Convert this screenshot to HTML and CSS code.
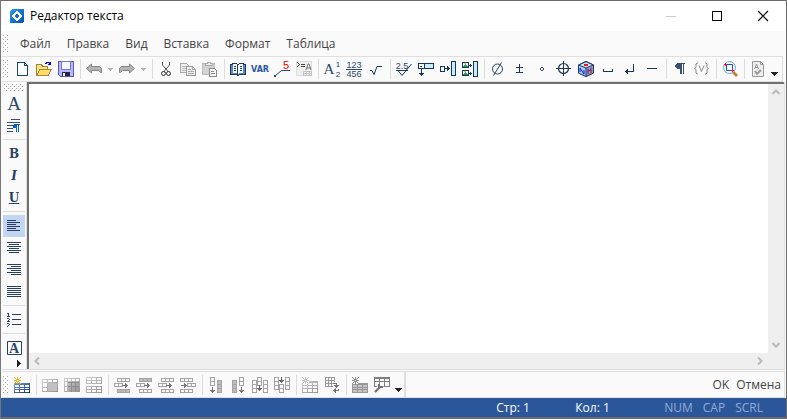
FILE: index.html
```
<!DOCTYPE html>
<html lang="ru">
<head>
<meta charset="utf-8">
<title>Редактор текста</title>
<link rel="stylesheet" href="styles.css">
</head>
<body>
<svg class="defs" aria-hidden="true">
  <defs>
    <linearGradient id="gray" x1="0" y1="0" x2="1" y2="1"><stop offset="0" stop-color="#cfcfcf"/><stop offset="1" stop-color="#929292"/></linearGradient>
    <linearGradient id="logo" x1="0" y1="0" x2="1" y2="1"><stop offset="0" stop-color="#2b9cf0"/><stop offset="1" stop-color="#0450ae"/></linearGradient>
    <linearGradient id="blue" x1="0" y1="0" x2="1" y2="1"><stop offset="0" stop-color="#7fa0d8"/><stop offset="1" stop-color="#0e3566"/></linearGradient>
    <g id="row"><path d="M0 0h13v4h-13zM1 1v2h3v-2zM5 1v2h3v-2zM9 1v2h3v-2z" fill-rule="evenodd"/></g>
    <g id="rowfull"><path d="M0 0h13v4h-13z"/><path d="M1 1h3v2h-3zM5 1h3v2h-3zM9 1h3v2h-3z" fill="#bdbdbd"/></g>
    <g id="rowhalf"><path d="M0 0h9v4h-9zM1 1v2h3v-2zM5 1v2h3v-2z" fill-rule="evenodd"/></g>
    <g id="col"><path d="M0 0h5v13h-5zM1 1v3h3v-3zM1 5v3h3v-3zM1 9v3h3v-3z" fill-rule="evenodd"/></g>
    <g id="colfull"><path d="M0 0h5v13h-5z"/><path d="M1 1h3v3h-3zM1 5h3v3h-3zM1 9h3v3h-3z" fill="#bdbdbd"/></g>
    <g id="colhalf"><path d="M0 0h5v9h-5zM1 1v3h3v-3zM1 5v3h3v-3z" fill-rule="evenodd"/></g>
    <g id="arrowr"><path d="M0 2h3v-2h1v1h1v1h1v1h-1v1h-1v1h-1v-2h-3z"/></g>
    <g id="arrowd"><path d="M2 0h1v3h2v1h-1v1h-1v1h-1v-1h-1v-1h-1v-1h2z"/></g>
    <g id="table"><path d="M0 0h16v10h-16zM1 2v2h4v-2zM6 2v2h4v-2zM11 2v2h4v-2zM1 5v1h4v-1zM6 5v1h4v-1zM11 5v1h4v-1zM1 7v2h4v-2zM6 7v2h4v-2zM11 7v2h4v-2z" fill-rule="evenodd"/></g>
    <g id="spark"><path d="M3 0h1v2h-1zM3 5h1v2h-1zM0 3h2v1h-2zM5 3h2v1h-2zM0 0h1v1h1v1h-1v-1h-1zM6 0h1v1h-1v1h-1v-1h1zM1 5h1v1h-1v1h-1v-1h1zM5 5h1v1h1v1h-1v-1h-1zM2 2h3v3h-3zM3 3v1h1v-1z" fill-rule="evenodd"/></g>
  </defs>
</svg>
<main class="window">
  <header class="titlebar">
    <svg class="logo" viewBox="0 0 14 14"><path d="M2 0h12v12l-2 2h-12v-12z" fill="url(#logo)"/><path d="M7 1.500 12.500 7 7 12.500 1.500 7z" fill="#fff"/><path d="M7 4.500 9.500 7 7 9.500 4.500 7z" fill="#1267c8"/><path d="m3 5 2-2M9 11l2-2" stroke="#1975d2"/></svg>
    <h1>Редактор текста</h1>
    <button class="caption" disabled aria-label="Свернуть"><svg viewBox="0 0 10 10"><path d="M0 5.500h10" stroke="#ccc"/></svg></button>
    <button class="caption" aria-label="Развернуть"><svg viewBox="0 0 10 10"><path d="M.5.5h9v9h-9z" fill="none" stroke="#000"/></svg></button>
    <button class="caption" aria-label="Закрыть"><svg class="smooth" viewBox="0 0 10 10"><path d="m0 0 10 10M10 0 0 10" stroke="#000" stroke-width="1.100"/></svg></button>
  </header>

  <nav class="menubar">
    <span class="grip"></span>
    <button>Файл</button><button>Правка</button><button>Вид</button><button>Вставка</button><button>Формат</button><button>Таблица</button>
  </nav>

  <div class="toolbar top" role="toolbar" aria-label="Стандартная">
    <span class="grip"></span>
    <button class="tool" aria-label="Создать"><svg viewBox="0 0 16 16"><path d="M3.500 1.500h7l3 3v10h-10z" fill="#fff" stroke="#174a72"/><path d="M10.500 1.500v3h3" fill="none" stroke="#174a72"/></svg></button>
    <button class="tool" aria-label="Открыть"><svg viewBox="0 0 16 16"><path d="M.5 14.500v-11h5l1 2h5v3" fill="#ffe680" stroke="#a7803a"/><path d="M.5 14.500 4 8.500h11.500l-3.500 6z" fill="#ffdc6e" stroke="#b08432"/><path d="M9 2h1v-1h3v1h1v-1M14 1v3M11.500 3.500h3M14.500 1v3" fill="none" stroke="#00f"/></svg></button>
    <button class="tool" aria-label="Сохранить"><svg viewBox="0 0 16 16"><path d="M.5.500h15v15h-13l-2-2z" fill="#b8b8fa" stroke="#5555c4"/><path d="M3.500.500h9v8h-9z" fill="#f4f7ff" stroke="#7777cf"/><path d="M4 11h8v4h-8z" fill="#24244c"/><path d="M5 12h2v3h-2z" fill="#fff"/></svg></button>
    <span class="sep"></span>
    <button class="tool" aria-label="Отменить"><svg class="smooth" viewBox="0 0 16 16"><path d="M.5 7.500 5.500 3v2.500h8l2 2v4h-1l-2-2h-7v2.500z" fill="#b4b4b4" stroke="#858585"/></svg></button>
    <button class="drop" aria-label="Список отмены"><svg viewBox="0 0 5 3"><path d="M0 0h5v1h-1v1h-1v1h-1v-1h-1v-1h-1z" fill="#b2b2b2"/></svg></button>
    <button class="tool" aria-label="Вернуть"><svg class="smooth" viewBox="0 0 16 16"><path d="M15.500 7.500 10.500 3v2.500h-8l-2 2v4h1l2-2h7v2.500z" fill="#b4b4b4" stroke="#858585"/></svg></button>
    <button class="drop" aria-label="Список возврата"><svg viewBox="0 0 5 3"><path d="M0 0h5v1h-1v1h-1v1h-1v-1h-1v-1h-1z" fill="#b2b2b2"/></svg></button>
    <span class="sep"></span>
    <button class="tool" aria-label="Вырезать"><svg class="smooth" viewBox="0 0 16 16"><path d="M4.500 1v3l6 7M11.500 1v3l-6 7" fill="none" stroke="#555"/><circle cx="5.500" cy="12.500" r="2" fill="none" stroke="#333"/><circle cx="10.500" cy="12.500" r="2" fill="none" stroke="#333"/></svg></button>
    <button class="tool" aria-label="Копировать"><svg viewBox="0 0 16 16"><path d="M.5 2.500h6l2 2v7h-8z" fill="#eee" stroke="#aaa"/><path d="M2 5h4M2 7h4M2 9h4" stroke="#bbb"/><path d="M6.500 5.500h6l3 3v6h-9z" fill="#eee" stroke="#999"/><path d="M12.500 5.500v3h3M8 8.500h3M8 10.500h6M8 12.500h6" fill="none" stroke="#aaa"/></svg></button>
    <button class="tool" aria-label="Вставить"><svg viewBox="0 0 16 16"><path d="M.5 2.500h12v11h-12z" fill="#d2d2d2" stroke="#bbb"/><path d="M3 4V2h2v-1h3v1h2v2z" fill="#eee" stroke="#aaa"/><path d="M7.500 7.500h5l2 2v6h-7z" fill="#f6f6f6" stroke="#888"/><path d="M9 10.500h3M9 12.500h4" stroke="#888"/></svg></button>
    <span class="sep"></span>
    <button class="tool" aria-label="Словарь"><svg viewBox="0 0 16 16"><path d="M.5 3.500h2v-1h4l1.500 1 1.500-1h4v1h2v10h-6l-1.500 1-1.500-1h-6z" fill="#5e85b5" stroke="#17375e"/><path d="M3 3h4l1 1 1-1h4v9h-4l-1 1-1-1h-4z" fill="#f2f8ff"/><path d="M7.500 3v11M4 5.500h2M4 7.500h2M4 9.500h2M10 5.500h2M10 7.500h2M10 9.500h2" stroke="#17375e"/></svg></button>
    <button class="tool" aria-label="Переменная"><svg class="smooth" viewBox="0 0 16 16"><text x="8" y="11" class="var">VAR</text></svg></button>
    <button class="tool" aria-label="Выноска"><svg class="smooth" viewBox="0 0 16 16"><path d="M1 15 7.500 9.500h8.500" fill="none" stroke="#29476b"/><path d="M0 14h2v2h-2z" fill="#29476b"/><text x="12" y="8" class="five">5</text></svg></button>
    <button class="tool" aria-label="Условие"><svg viewBox="0 0 16 16"><path d="M.5.500h15v14h-15z" fill="#eee" stroke="#ddd"/><path d="M1 1h1v1h1v1h1v1h-1v1h-1v1h-1v-1h1v-1h1v-1h-1v-1h-1zM5 3h4v1h-4zM5 5h4v1h-4z" fill="#444"/><path class="smooth" d="m10 9 2-6h1l2 6M11 7h4" fill="none" stroke="#777"/><path d="M7 10h9v5h-9z" fill="#c4c4c4"/><path d="M8 11h2v1h-2zM11 11h2v1h-2zM14 11h1v1h-1zM8 13h2v1h-2zM11 13h2v1h-2zM14 13h1v1h-1z" fill="#eee"/></svg></button>
    <span class="sep"></span>
    <button class="tool" aria-label="Индексы"><svg class="smooth" viewBox="0 0 16 16"><text x="5" y="13" class="serif">A</text><text x="14" y="6" class="index">1</text><text x="14" y="16" class="index">2</text></svg></button>
    <button class="tool" aria-label="Дробь"><svg class="smooth" viewBox="0 0 16 16"><text x="8" y="7" class="digits">123</text><path d="M0 8.500h16" stroke="#29476b"/><text x="8" y="16" class="digits">456</text></svg></button>
    <button class="tool" aria-label="Корень"><svg class="smooth" viewBox="0 0 16 16"><path d="M2 9.500h2l2 4 3-8h5" fill="none" stroke="#173454"/></svg></button>
    <span class="sep"></span>
    <button class="tool" aria-label="Шероховатость"><svg class="smooth" viewBox="0 0 16 16"><text x="6" y="8" class="digits">2.5</text><path d="M0 9.500h12M2 9.500l4 5L15.500 3" fill="none" stroke="#173454"/></svg></button>
    <button class="tool" aria-label="Допуск формы"><svg viewBox="0 0 16 16"><path d="M.5 2.500h15v5h-15z" fill="#c9ecfa" stroke="#17375e"/><path d="M1 3h5v4h-5z" fill="#fff"/><path d="M6.500 2v5M2 5.500h2M3.500 8v5" stroke="#17375e"/><path d="M1 12h5v1h-1v1h-1v1h-1v-1h-1v-1h-1z" fill="#17375e"/></svg></button>
    <button class="tool" aria-label="Вставить ссылку"><svg viewBox="0 0 16 16"><path d="M.5 5.500h4v5h-4z" fill="#fff" stroke="#17375e"/><path d="M11.500.500h4v14h-4z" fill="#c9ecfa" stroke="#17375e"/><path d="M5 7.500h5M7.500 5v5M8.500 6v3" stroke="#17375e"/></svg></button>
    <button class="tool" aria-label="Вставить изображения"><svg viewBox="0 0 16 16"><path d="M.5 1.500h6v5h-6zM.5 9.500h6v5h-6z" fill="#fff" stroke="#17375e"/><path d="M1 5 4 3l2 3h-5zM1 13l3-2 2 3h-5z" fill="#32994c"/><path d="M2 2h2v1h-2zM2 10h2v1h-2z" fill="#eec241"/><path d="M11.500.500h4v15h-4z" fill="#c9ecfa" stroke="#17375e"/><path d="M7 4.500h3M8.500 3v3M7 12.500h3M8.500 11v3" stroke="#17375e"/></svg></button>
    <span class="sep"></span>
    <button class="tool" aria-label="Диаметр"><svg class="smooth" viewBox="0 0 16 16"><circle cx="7.500" cy="8" r="5" fill="none" stroke="#29476b"/><path d="M3.500 14.500 11.500 1.500" stroke="#29476b"/></svg></button>
    <button class="tool" aria-label="Плюс-минус"><svg viewBox="0 0 16 16"><path d="M7.500 3v8M4 6.500h7M4 11.500h7" stroke="#17375e"/></svg></button>
    <button class="tool" aria-label="Градус"><svg viewBox="0 0 16 16"><path d="M7 6h2v1h1v2h-1v1h-2v-1h-1v-2h1zM7 7v2h2v-2z" fill="#29476b" fill-rule="evenodd"/></svg></button>
    <button class="tool" aria-label="Позиция"><svg class="smooth" viewBox="0 0 16 16"><circle cx="7.500" cy="7.500" r="5" fill="none" stroke="#173454" stroke-width="1.200"/><path d="M7.500 0v15M0 7.500h15" stroke="#173454"/></svg></button>
    <button class="tool" aria-label="Модель"><svg class="smooth" viewBox="0 0 16 16"><path d="M8 .5 15.500 4v8L8 15.500.5 12V4z" fill="#c3e6f2" stroke="#263a73"/><path d="m.5 4 7.500 3v8.500L.5 12z" fill="#a5cff0"/><path d="M8 7 15.500 4v8L8 15.500z" fill="#8c9cb8"/><path d="M8 .5 15.500 4v8L8 15.500.5 12V4zM.5 4 8 7l7.500-3M8 7v8" fill="none" stroke="#263a73"/><path d="M6 3h4v2h-4z" fill="#f01818"/><path d="M2 11V7l4 6V9" fill="none" stroke="#1818e0"/><path d="M10 8v5M13 7v5M10 10l3-1" stroke="#90155e"/></svg></button>
    <button class="tool" aria-label="Пробел"><svg viewBox="0 0 16 16"><path d="M3.500 8v2.500h9v-2.500" fill="none" stroke="#17375e"/></svg></button>
    <button class="tool" aria-label="Перенос строки"><svg viewBox="0 0 16 16"><path d="M11.500 3v7.500h-8" fill="none" stroke="#17375e"/><path d="M3 10h1v-1h1v-1h1v5h-1v-1h-1v-1h-1z" fill="#17375e"/></svg></button>
    <button class="tool" aria-label="Тире"><svg viewBox="0 0 16 16"><path d="M3 7.500h10" stroke="#17375e"/></svg></button>
    <span class="sep"></span>
    <button class="tool" aria-label="Непечатаемые знаки"><svg viewBox="0 0 16 16"><path d="M5 2h8v1h-1v10h-1v-10h-1v10h-2v-5h-3v-1h-1v-1h-1v-2h1v-1h1z" fill="#3b5172"/></svg></button>
    <button class="tool" aria-label="Значения переменных"><svg class="smooth" viewBox="0 0 16 16"><path d="M4 2H3L2 3v3.500L.5 7.500 2 8.500V12l1 1h1M11 2h1l1 1v3.500l1.500 1-1.500 1V12l-1 1h-1M5 4.500l2.500 6 2.500-6" fill="none" stroke="#888"/></svg></button>
    <span class="sep"></span>
    <button class="tool" aria-label="Показать всё"><svg class="smooth" viewBox="0 0 16 16"><path d="m11 11 4 4" stroke="#c9822c" stroke-width="3"/><circle cx="7.500" cy="6.500" r="6" fill="#f5fdff" stroke="#6fa6d8"/><path d="M4.500 3.500h6v6h-6z" fill="none" stroke="#2443e8"/><path d="M3.500 2v3M2 3.500h3M10.500 8v3M9 9.500h3" stroke="#ff2020"/></svg></button>
    <span class="sep"></span>
    <button class="tool" aria-label="Проверка орфографии"><svg class="smooth" viewBox="0 0 16 16"><path d="M2.500.500h8l3 3v12h-11z" fill="#efefef" stroke="#999"/><path d="M10.500.500v3h3M4.500 8l2-5 2 5M5 6.500h3" fill="none" stroke="#999"/><path d="m5 10 2 3 4-4" fill="none" stroke="#999" stroke-width="2"/></svg></button>
    <button class="overflow" aria-label="Ещё"><svg viewBox="0 0 7 4"><path d="M0 0h7v1h-1v1h-1v1h-1v1h-1v-1h-1v-1h-1v-1h-1z" fill="#222"/></svg></button>
  </div>

  <section class="workspace">
    <div class="sidebar" role="toolbar" aria-label="Форматирование">
      <span class="grip flat"></span>
      <button class="tool" aria-label="Шрифт"><svg class="smooth" viewBox="0 0 16 16"><text x="8" y="14" class="serif big">A</text></svg></button>
      <button class="tool" aria-label="Абзац"><svg viewBox="0 0 16 16"><path d="M5 1.500h9M1 4.500h13M1 7.500h6M1 10.500h6M1 13.500h6" stroke="#3b5172"/><path d="M8 6h6v1h-1v7h-1v-7h-1v7h-1v-4h-1v-1h-1z" fill="#0b5dcc"/><path d="M7 7h3v3h-3z" fill="#0b5dcc"/></svg></button>
      <span class="sep"></span>
      <button class="tool letter bold" aria-label="Полужирный">B</button>
      <button class="tool letter italic" aria-label="Курсив">I</button>
      <button class="tool letter under" aria-label="Подчёркнутый">U</button>
      <span class="sep"></span>
      <button class="tool active" aria-label="По левому краю" aria-pressed="true"><svg viewBox="0 0 16 16"><path d="M1 2.500h9M1 4.500h13M1 6.500h9M1 8.500h13M1 10.500h9M1 12.500h13" stroke="#263f63"/></svg></button>
      <button class="tool" aria-label="По центру"><svg viewBox="0 0 16 16"><path d="M1 2.500h14M3 4.500h10M1 6.500h14M3 8.500h10M1 10.500h14M3 12.500h10" stroke="#263f63"/></svg></button>
      <button class="tool" aria-label="По правому краю"><svg viewBox="0 0 16 16"><path d="M1 2.500h14M5 4.500h10M1 6.500h14M5 8.500h10M1 10.500h14M5 12.500h10" stroke="#263f63"/></svg></button>
      <button class="tool" aria-label="По ширине"><svg viewBox="0 0 16 16"><path d="M1 2.500h14M1 4.500h14M1 6.500h14M1 8.500h14M1 10.500h14M1 12.500h14" stroke="#263f63"/></svg></button>
      <span class="sep"></span>
      <button class="tool" aria-label="Список"><svg viewBox="0 0 16 16"><path d="M6 2.500h9M6 7.500h9M6 12.500h9" stroke="#263f63"/><path d="M2 1h1v3h1v1h-3v-1h1v-2h-1v-1h1zM1 6h2v1h1v1h-1v1h1v1h-3v-1h1v-1h1v-1h-2zM1 11h2v1h1v1h-1v1h-1v1h-1v-1h1v-1h1v-1h-2z" fill="#263f63"/></svg></button>
      <span class="sep"></span>
      <button class="tool" aria-label="Рамка текста"><svg class="smooth" viewBox="0 0 16 16"><path d="M1.500 1.500h14v13h-14z" fill="#fff" stroke="#263f63"/><text x="8" y="13" class="framed">A</text></svg></button>
      <button class="more" aria-label="Ещё"><svg viewBox="0 0 4 7"><path d="M0 0h1v1h1v1h1v1h1v1h-1v1h-1v1h-1v1h-1z" fill="#222"/></svg></button>
    </div>
    <div class="editor">
      <textarea aria-label="Текст"></textarea>
      <div class="scroll vertical">
        <button aria-label="Вверх"><svg class="smooth" viewBox="0 0 8 8"><path d="M.5 6 4 2.500 7.500 6" fill="none" stroke="#bababa" stroke-width="2"/></svg></button>
        <button aria-label="Вниз"><svg class="smooth" viewBox="0 0 8 8"><path d="M.5 2 4 5.500 7.500 2" fill="none" stroke="#bababa" stroke-width="2"/></svg></button>
      </div>
      <div class="scroll horizontal">
        <button aria-label="Влево"><svg class="smooth" viewBox="0 0 8 8"><path d="M6 .5 2.500 4 6 7.500" fill="none" stroke="#bababa" stroke-width="2"/></svg></button>
        <button aria-label="Вправо"><svg class="smooth" viewBox="0 0 8 8"><path d="M2 .5 5.500 4 2 7.500" fill="none" stroke="#bababa" stroke-width="2"/></svg></button>
      </div>
      <div class="corner"></div>
    </div>
  </section>

  <div class="actions">
    <div class="toolbar tables" role="toolbar" aria-label="Таблица">
      <span class="grip"></span>
      <button class="tool" aria-label="Создать таблицу"><svg viewBox="0 0 16 16"><path d="M0 6h16v10h-16z" fill="#fff"/><use href="#table" y="6" fill="url(#blue)"/><use href="#spark" fill="#ecba22"/></svg></button>
      <span class="sep"></span>
      <button class="tool" aria-label="Выделить ячейку"><svg viewBox="0 0 16 16"><path d="M0 2h16v13h-16zM1 3v2h4v-2zM6 3v2h4v-2zM11 3v2h4v-2zM1 6v4h4v-4zM1 11v3h4v-3z" fill="url(#gray)" fill-rule="evenodd"/><path d="M6 6h9v8h-9z" fill="#c0c0c0"/></svg></button>
      <button class="tool" aria-label="Выделить таблицу"><svg viewBox="0 0 16 16"><path d="M0 1h16v14h-16zM1 2v2h2v-2zM4 2v2h3v-2zM8 2v2h3v-2zM12 2v2h3v-2zM1 5v4h2v-4zM1 10v4h2v-4z" fill="url(#gray)" fill-rule="evenodd"/><path d="M4 5.500h11M4 9.500h11M7.500 5v10M11.500 5v10" stroke="#8d8d8d"/></svg></button>
      <button class="tool" aria-label="Разделить таблицу"><svg viewBox="0 0 16 16"><path d="M0 0h16v7h-16zM1 1v2h4v-2zM6 1v2h4v-2zM11 1v2h4v-2zM1 4v2h4v-2zM6 4v2h4v-2zM11 4v2h4v-2zM0 9h16v7h-16zM1 10v2h4v-2zM6 10v2h4v-2zM11 10v2h4v-2zM1 13v2h4v-2zM6 13v2h4v-2zM11 13v2h4v-2z" fill="url(#gray)" fill-rule="evenodd"/></svg></button>
      <span class="sep"></span>
      <button class="tool" aria-label="Строка выше"><svg viewBox="0 0 16 16" fill="#a4a4a4"><use href="#row" x="3" y="1"/><use href="#rowhalf" y="6"/><use href="#arrowr" x="8" y="6" fill="#777"/><use href="#rowfull" x="3" y="12"/></svg></button>
      <button class="tool" aria-label="Строка ниже"><svg viewBox="0 0 16 16" fill="#a4a4a4"><use href="#rowfull" x="3" y="1"/><use href="#rowhalf" y="6"/><use href="#arrowr" x="8" y="6" fill="#777"/><use href="#row" x="3" y="12"/></svg></button>
      <button class="tool" aria-label="Вставить строку"><svg viewBox="0 0 16 16" fill="#a4a4a4"><use href="#row" x="3" y="1"/><use href="#rowhalf" y="6"/><use href="#arrowr" x="8" y="6" fill="#777"/><use href="#row" x="3" y="12"/></svg></button>
      <button class="tool" aria-label="Удалить строку"><svg viewBox="0 0 16 16" fill="#a4a4a4"><use href="#row" y="1"/><use href="#rowhalf" x="7" y="6"/><use href="#arrowr" x="1" y="6" fill="#777"/><use href="#row" y="12"/></svg></button>
      <span class="sep"></span>
      <button class="tool" aria-label="Столбец слева"><svg viewBox="0 0 16 16" fill="#a4a4a4"><use href="#colhalf" x="2"/><use href="#arrowd" x="2" y="10" fill="#777"/><use href="#colfull" x="9" y="3"/></svg></button>
      <button class="tool" aria-label="Столбец справа"><svg viewBox="0 0 16 16" fill="#a4a4a4"><use href="#colfull" x="2" y="3"/><use href="#colhalf" x="9"/><use href="#arrowd" x="9" y="10" fill="#777"/></svg></button>
      <button class="tool" aria-label="Вставить столбец"><svg viewBox="0 0 16 16" fill="#a4a4a4"><use href="#col" y="3"/><use href="#colhalf" x="5"/><use href="#arrowd" x="5" y="8" fill="#666"/><use href="#col" x="11" y="3"/></svg></button>
      <button class="tool" aria-label="Удалить столбец"><svg viewBox="0 0 16 16" fill="#a4a4a4"><use href="#col"/><use href="#colhalf" x="5" y="7"/><use href="#arrowd" x="5" y="0" fill="#666"/><use href="#col" x="11"/></svg></button>
      <span class="sep"></span>
      <button class="tool" aria-label="Добавить ячейки"><svg viewBox="0 0 16 16"><path d="M0 4h16v12h-16zM1 6v2h4v-2zM6 6v2h4v-2zM11 6v2h4v-2zM1 9v2h4v-2zM6 9v2h4v-2zM11 9v2h4v-2zM1 12v3h4v-3zM6 12v3h4v-3zM11 12v3h4v-3z" fill="url(#gray)" fill-rule="evenodd"/><path d="M0 0h7v7h-7z" fill="#fafafa"/><use href="#spark" fill="#c2c2c2"/></svg></button>
      <button class="tool" aria-label="Преобразовать"><svg viewBox="0 0 16 16"><path d="M1 0h10v10h-10zM2 1v2h2v-2zM5 1v2h2v-2zM8 1v2h2v-2zM2 4v2h2v-2zM5 4v2h2v-2zM8 4v2h2v-2zM2 7v2h2v-2zM5 7v2h2v-2zM8 7v2h2v-2z" fill="#999" fill-rule="evenodd"/><path d="M9 5h7v11h-7z" fill="#fafafa"/><path d="M9 6h4v2h2v1h-1v1h-1v1h-1v-1h-1v-1h-1v-1h2v-1h-3zM9 13h1v-1h1v-1h1v2h2v-1h1v2h-3v2h-1v-1h-1v-1h-1z" fill="#777"/></svg></button>
      <span class="sep"></span>
      <button class="tool" aria-label="Автоформат таблицы"><svg viewBox="0 0 16 16"><path d="M0 6h16v10h-16z" fill="#c4c4c4"/><use href="#table" y="6" fill="#989898"/><path d="M0 0h7v7h-7z" fill="#fafafa"/><use href="#spark" fill="#888"/></svg></button>
      <button class="tool" aria-label="Свойства таблицы"><svg viewBox="0 0 16 16"><path d="M0 0h16v10h-16zM1 2v2h4v-2zM6 2v2h4v-2zM11 2v2h4v-2zM1 5v4h4v-4zM6 5v4h4v-4zM11 5v4h4v-4z" fill="#808080" fill-rule="evenodd"/><path class="smooth" d="m0 16 8-8" stroke="#fafafa" stroke-width="5"/><path class="smooth" d="m1 15 5-5M5 7v3h4" fill="none" stroke="#707070" stroke-width="2"/></svg></button>
      <button class="overflow" aria-label="Ещё"><svg viewBox="0 0 7 4"><path d="M0 0h7v1h-1v1h-1v1h-1v1h-1v-1h-1v-1h-1v-1h-1z" fill="#222"/></svg></button>
    </div>
    <div class="dialog">
      <button>OK</button><button>Отмена</button>
    </div>
  </div>

  <footer class="status">
    <span class="place">Стр: 1</span><span class="place">Кол: 1</span>
    <span class="locks"><span>NUM</span><span>CAP</span><span>SCRL</span></span>
  </footer>
</main>
</body>
</html>
```
FILE: styles.css
```
* {
  box-sizing: border-box;
}

body {
  margin: 0;
  font: 12px/16px "Open Sans", "Noto Sans", sans-serif;
  color: #444;
}

button {
  flex: none;
  display: flex;
  align-items: center;
  justify-content: center;
  padding: 0;
  border: 0;
  background: none;
  font: inherit;
  color: inherit;
}

svg {
  display: block;
  overflow: visible;
  shape-rendering: crispEdges;
}

.smooth {
  shape-rendering: auto;
}

.defs {
  position: absolute;
  width: 0;
  height: 0;
}

.window {
  display: flex;
  flex-direction: column;
  min-height: 100vh;
  padding-left: 1px;
  border: 1px solid #6b6b6b;
  border-left-color: #777;
  border-bottom-width: 2px;
  background: #fafafa;
}

/* Title bar */
.titlebar {
  display: flex;
  align-items: center;
  height: 30px;
  padding-left: 8px;
  background: #fff;
  color: #000;
}

.logo {
  width: 14px;
  height: 14px;
  margin-right: 6px;
}

h1 {
  flex: 1;
  margin: 0;
  font: inherit;
}

.caption {
  width: 46px;
  height: 28px;
}

.caption svg {
  width: 10px;
  height: 10px;
}

/* Menu */
.menubar {
  display: flex;
  align-items: center;
  gap: 16px;
  height: 25px;
}

.menubar .grip {
  margin-right: -7px;
}

.grip {
  flex: none;
  width: 9px;
  height: 18px;
  padding: 0 2px 0 1px;
  background:
    conic-gradient(from 0deg at 1px 1px, transparent 75%, #a8a8a8 0) 0 0 / 4px 4px content-box,
    conic-gradient(from 0deg at 1px 1px, transparent 75%, #a8a8a8 0) 2px 2px / 4px 4px content-box;
}

.grip.flat {
  width: 22px;
  height: 7px;
  margin-bottom: 2px;
  padding: 0 1px;
}

/* Toolbars */
.toolbar {
  display: flex;
  align-items: center;
}

.toolbar.top {
  height: 26px;
  margin-right: 3px;
  border: 1px solid #dfdfdf;
  border-left: 0;
}

.tool {
  width: 22px;
  height: 22px;
}

.tool svg {
  width: 16px;
  height: 16px;
}

.toolbar .sep {
  flex: none;
  width: 1px;
  height: 20px;
  margin: 0 2px 0 3px;
  background: #dcdcdc;
}

.drop {
  width: 11px;
  height: 22px;
}

.drop svg {
  width: 5px;
  height: 3px;
}

.overflow {
  align-self: flex-end;
  width: 11px;
  height: 14px;
}

.overflow svg {
  width: 7px;
  height: 4px;
}

svg text {
  text-anchor: middle;
  fill: #29476b;
}

svg .var {
  font: bold 8px "DejaVu Sans", sans-serif;
  fill: #2857a8;
}

svg .five {
  font: 11px "Liberation Sans", sans-serif;
  fill: #f00000;
}

.serif {
  font: 15px "Liberation Serif", serif;
}

.big {
  font-size: 19px;
}

.framed {
  font: bold 14px "Liberation Serif", serif;
}

.digits {
  font: 9px "Liberation Sans", sans-serif;
}

.index {
  font: 8px "Liberation Sans", sans-serif;
}

/* Work area */
.workspace {
  flex: 1;
  display: flex;
  margin-right: 1px;
  border-right: 1px solid #dfdfdf;
  border-bottom: 1px solid #dfdfdf;
}

.sidebar {
  display: flex;
  flex-direction: column;
  width: 25px;
  padding: 2px 1px 0;
  border: solid #dfdfdf;
  border-width: 0 1px 0 0;
}

.sidebar .sep {
  flex: none;
  height: 1px;
  margin: 2px 0 3px;
  background: #dcdcdc;
}

.active {
  background: #c2d5f2;
}

.letter {
  font: bold 12px/22px "DejaVu Serif", serif;
  color: #263f63;
}

.italic {
  font-style: italic;
}

.under {
  text-decoration: underline;
}

.more {
  width: 22px;
  height: 9px;
  padding-left: 10px;
}

.more svg {
  width: 4px;
  height: 7px;
}

.editor {
  flex: 1;
  display: grid;
  grid-template: 1fr 16px / 1fr 16px;
  border: solid #707070;
  border-width: 2px 0 0 2px;
  background: #fff;
}

textarea {
  width: 100%;
  height: 100%;
  padding: 4px;
  border: 0;
  outline: 0;
  resize: none;
  overflow: hidden;
  font: inherit;
}

.scroll,
.corner {
  display: flex;
  justify-content: space-between;
  background: #efefef;
}

.vertical {
  flex-direction: column;
}

.scroll button {
  width: 16px;
  height: 16px;
}

.scroll svg {
  width: 8px;
  height: 8px;
}

/* Table tools and dialog buttons */
.actions {
  display: flex;
  height: 27px;
  margin-top: 1px;
  margin-right: 1px;
  border: solid #dfdfdf;
  border-width: 1px 1px 1px 0;
}

.tables {
  border-right: 2px solid #dfdfdf;
}

.dialog {
  flex: 1;
  display: flex;
  align-items: center;
  justify-content: flex-end;
  gap: 7px;
  padding-right: 3px;
}

/* Status bar */
.status {
  display: flex;
  align-items: center;
  justify-content: flex-end;
  height: 19px;
  padding-right: 23px;
  margin-left: -1px;
  background: #2b579a;
  color: #fff;
}

.place {
  width: 79px;
}

.locks {
  display: flex;
  gap: 10px;
  margin-left: 10px;
  color: #8fabd8;
}
```
